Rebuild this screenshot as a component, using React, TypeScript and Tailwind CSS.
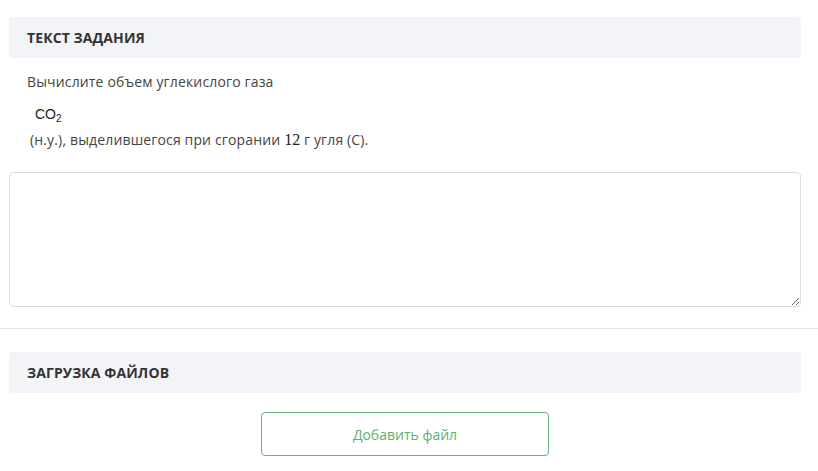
import React from 'react'

function SectionHeader({ title }: { title: string }) {
  return (
    <div className="flex h-[41px] items-center rounded-[4px] bg-[#f3f4f7] px-[18px]">
      <h3 className="text-[14px] font-bold uppercase tracking-[0.1px] text-[#333]">
        {title}
      </h3>
    </div>
  )
}

export default function App() {
  return (
    <div className="min-h-[471px] bg-white font-['Open_Sans',sans-serif] text-[#444]">
      <div className="pl-[9px] pr-[17px] pt-[17px]">
        <SectionHeader title="Текст задания" />
        <div className="px-[18px] pt-[14px] text-[14px] leading-[20px] tracking-[0.15px]">
          <p>Вычислите объем углекислого газа</p>
          <div className="mt-[12px] pl-[8px] font-['Liberation_Sans',sans-serif] text-[14px] tracking-normal text-[#222]">
            CO<sub className="text-[10px]">2</sub>
          </div>
          <p className="mt-[6px] pl-[3px]">
            (н.у.), выделившегося при сгорании{' '}
            <span className="font-['Liberation_Serif',serif] text-[16px] tracking-normal text-[#222]">12</span>{' '}
            г угля (С).
          </p>
        </div>
        <textarea className="mt-[22px] block h-[135px] w-[792px] rounded-[4px] border border-[#dcdcdc] bg-white p-2 text-[14px] outline-none" />
      </div>
      <div className="mt-[21px] border-t border-[#e3e3e3]" />
      <div className="pl-[9px] pr-[17px] pt-[23px]">
        <SectionHeader title="Загрузка файлов" />
        <div className="flex justify-center pt-[19px]">
          <button className="h-[44px] w-[288px] rounded-[4px] border border-[#6db07c] bg-white text-[14px] text-[#5fb06f]">
            Добавить файл
          </button>
        </div>
      </div>
    </div>
  )
}
